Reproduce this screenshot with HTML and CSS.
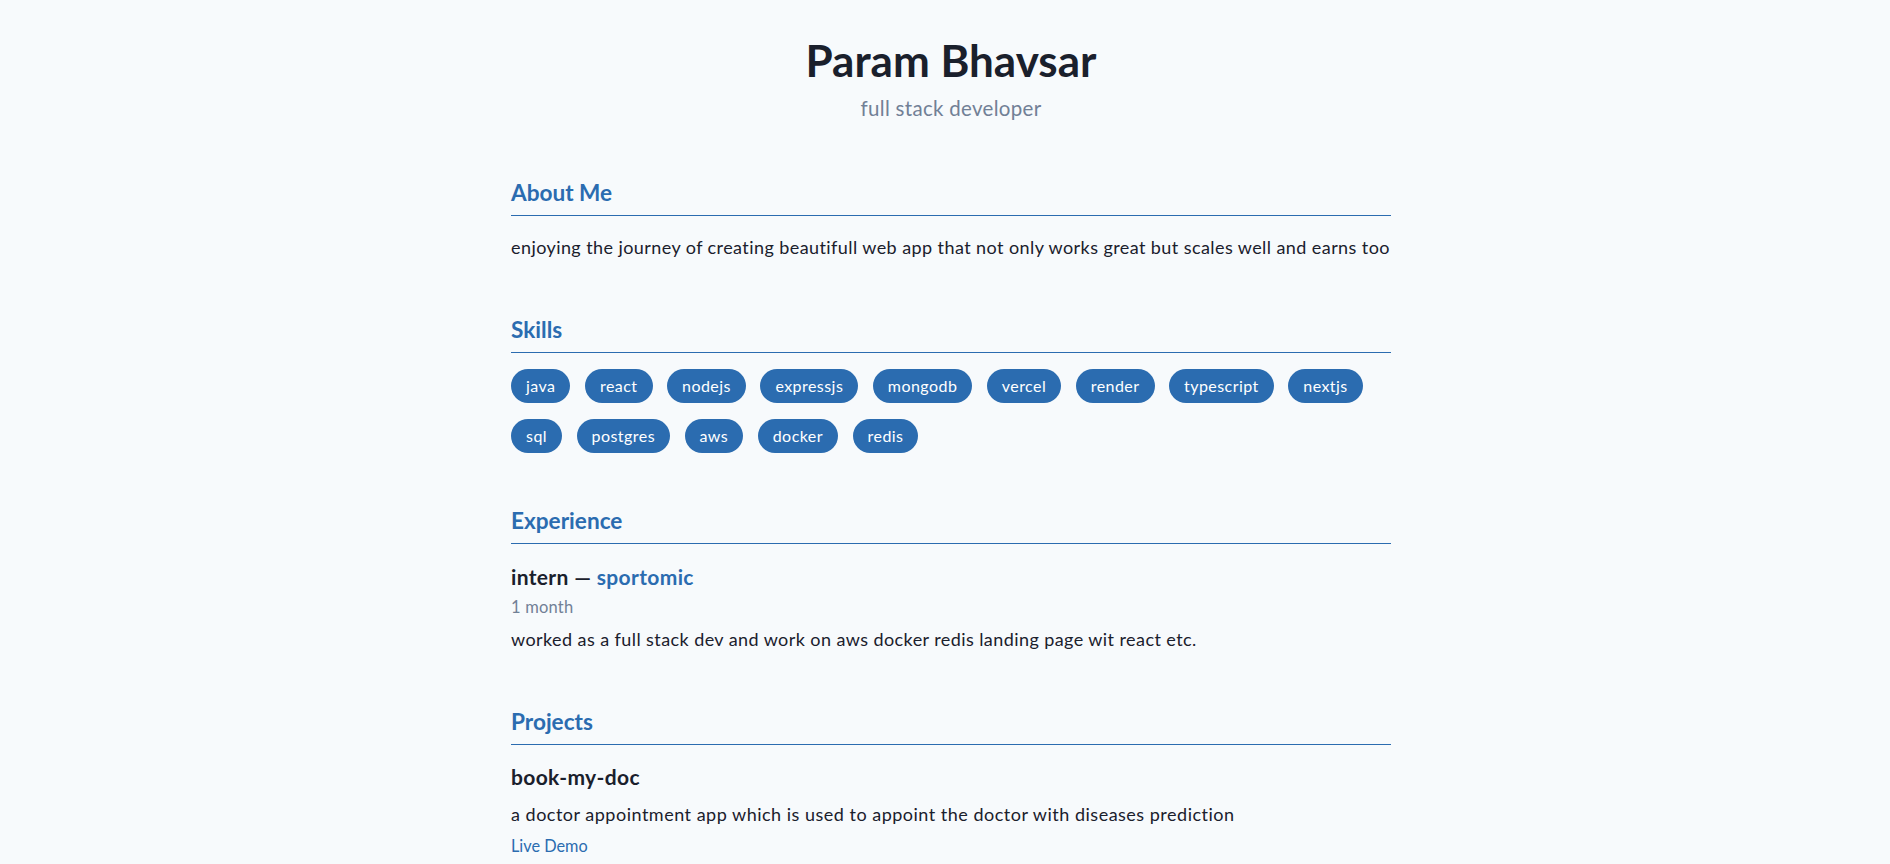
FILE: index.html
```html
<!DOCTYPE html>
<html lang="en">
<head>
<meta charset="utf-8">
<title>Param Bhavsar</title>
<link rel="stylesheet" href="styles.css">
</head>
<body>
<div class="page">
  <header class="header">
    <h1 class="name">Param Bhavsar</h1>
    <p class="role">full stack developer</p>
  </header>

  <section class="section">
    <h2 class="section-title">About Me</h2>
    <p class="text about">enjoying the journey of creating beautifull web app that not only works great but scales well and earns too</p>
  </section>

  <section class="section">
    <h2 class="section-title">Skills</h2>
    <ul class="skills">
      <li class="chip">java</li>
      <li class="chip">react</li>
      <li class="chip">nodejs</li>
      <li class="chip">expressjs</li>
      <li class="chip">mongodb</li>
      <li class="chip">vercel</li>
      <li class="chip">render</li>
      <li class="chip">typescript</li>
      <li class="chip">nextjs</li>
      <li class="chip">sql</li>
      <li class="chip">postgres</li>
      <li class="chip">aws</li>
      <li class="chip">docker</li>
      <li class="chip">redis</li>
    </ul>
  </section>

  <section class="section">
    <h2 class="section-title">Experience</h2>
    <div class="item">
      <h3 class="item-title">intern — <span class="company">sportomic</span></h3>
      <p class="meta">1 month</p>
      <p class="text desc">worked as a full stack dev and work on aws docker redis landing page wit react etc.</p>
    </div>
  </section>

  <section class="section">
    <h2 class="section-title">Projects</h2>
    <div class="item">
      <h3 class="item-title">book-my-doc</h3>
      <p class="text project-desc">a doctor appointment app which is used to appoint the doctor with diseases prediction</p>
      <a class="link" href="#">Live Demo</a>
    </div>
  </section>
</div>
</body>
</html>
```

FILE: styles.css
```css
* {
  box-sizing: border-box;
}

html, body {
  margin: 0;
  background: #f7fafc;
}

body {
  font-family: Lato, "Noto Sans", "Liberation Sans", sans-serif;
  color: #1a202c;
  padding-left: 12px;
}

.page {
  max-width: 880px;
  margin: 0 auto;
}

.header {
  text-align: center;
  padding-top: 35px;
}

.name {
  margin: 0;
  font-size: 44px;
  line-height: 50px;
  font-weight: 700;
  color: #1a202c;
}

.role {
  margin: 10px 0 0;
  font-size: 20.5px;
  line-height: 26px;
  letter-spacing: 0.3px;
  color: #718096;
}

.section {
  margin-top: 57px;
}

.section + .section {
  margin-top: 55px;
}

.section-title {
  margin: 0;
  font-size: 22.6px;
  line-height: 30px;
  font-weight: 700;
  color: #2b6cb0;
  padding-bottom: 7px;
  border-bottom: 1px solid #2b6cb0;
}

.text {
  margin: 0;
  font-size: 18px;
  line-height: 26px;
  letter-spacing: 0.42px;
  color: #1a202c;
}

.about {
  margin-top: 18px;
}

.skills {
  list-style: none;
  margin: 16px 0 0;
  padding: 0;
  display: flex;
  flex-wrap: wrap;
  column-gap: 14.5px;
  row-gap: 16px;
  margin-bottom: -2px;
}

.chip {
  background: #2b6cb0;
  color: #ffffff;
  font-size: 16px;
  line-height: 24px;
  letter-spacing: 0.45px;
  padding: 5px 15px;
  border-radius: 17px;
}

.item-title {
  margin: 19.5px 0 0;
  font-size: 21px;
  line-height: 26px;
  letter-spacing: 0.35px;
  font-weight: 700;
  color: #1a202c;
}

.company {
  color: #2b6cb0;
}

.meta {
  margin: 7px 0 0;
  font-size: 16.5px;
  line-height: 20px;
  letter-spacing: 0.2px;
  color: #718096;
}

.desc {
  margin-top: 9px;
}

.project-desc {
  margin-top: 11px;
  letter-spacing: 0.5px;
}

.link {
  display: block;
  margin-top: 9px;
  font-size: 16.3px;
  line-height: 20px;
  color: #2b6cb0;
  text-decoration: none;
}
```
